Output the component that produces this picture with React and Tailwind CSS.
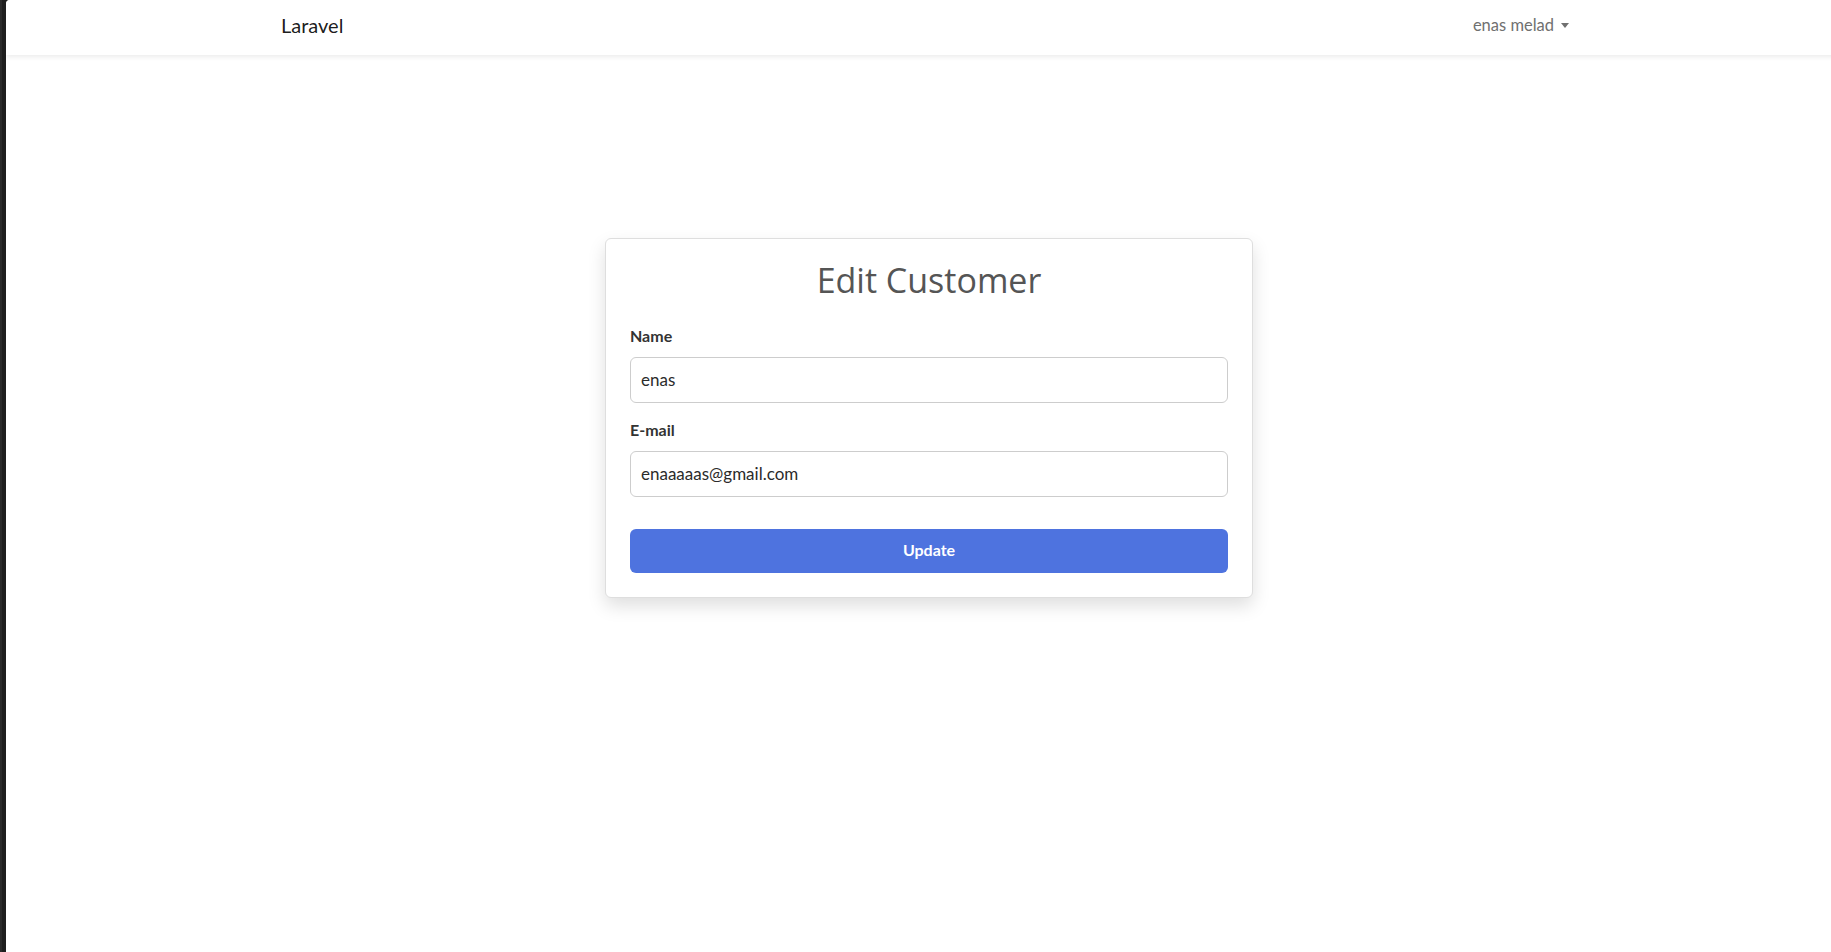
import React from 'react';

const Navbar = () => {
  return (
    <nav className="h-[55px] bg-white shadow-[0_2px_5px_rgba(0,0,0,0.08)] relative z-10">
      <div className="w-[1320px] mx-auto px-3 pb-[5px] h-full flex items-center justify-between">
        <a href="#" className="text-[20px] leading-[30px] text-black/90 font-['Lato',sans-serif]">
          Laravel
        </a>
        <button type="button" className="flex items-center pr-2 text-[16.5px] leading-6 text-[#707070] font-['Lato',sans-serif]">
          enas melad
          {/* dropdown caret */}
          <span className="ml-[7px] mt-[1px] w-0 h-0 border-t-[5px] border-t-[#707070] border-x-[4px] border-x-transparent" />
        </button>
      </div>
    </nav>
  );
};

const Field = ({ label, value, type = 'text', last }) => (
  <div className={last ? 'mt-[15px]' : 'mt-[23px]'}>
    <label className="block text-[16px] leading-6 font-bold text-[#333] mb-[9px]">{label}</label>
    <input
      type={type}
      defaultValue={value}
      className="block w-full h-[46px] px-[10px] pb-[2px] border border-[#cdcdcd] rounded-[6px] text-[17px] text-[#2b2b2b] outline-none"
    />
  </div>
);

const EditCustomer = () => {
  const handleSubmit = (e) => {
    e.preventDefault();
  };

  return (
    <div className="w-[648px] mx-auto mt-[183px] bg-white border border-[#dedede] rounded-[6px] p-6 shadow-[0_8px_18px_rgba(0,0,0,0.13)]">
      <h2 className="text-center text-[34px] leading-[38px] -mt-[2px] pb-[2px] text-[#555] font-['Open_Sans',sans-serif]">
        Edit Customer
      </h2>
      <form onSubmit={handleSubmit} className="font-['Lato',sans-serif]">
        <Field label="Name" value="enas" />
        <Field label="E-mail" value="enaaaaas@gmail.com" type="email" last />
        <button
          type="submit"
          className="mt-[32px] w-full h-[44px] pb-[2px] rounded-[6px] bg-[#4e73df] text-white text-[16px] font-bold"
        >
          Update
        </button>
      </form>
    </div>
  );
};

export default function App() {
  return (
    <div className="flex h-[952px] overflow-hidden bg-[#1e1e1e] font-['Lato',sans-serif]">
      <div className="w-[6px] shrink-0 border-l-2 border-l-[#2a2a2a]" />
      <div className="flex-1 bg-white rounded-tl-[4px] overflow-hidden">
        <div className="w-[1846px] shrink-0">
          <Navbar />
          <EditCustomer />
        </div>
      </div>
    </div>
  );
}
